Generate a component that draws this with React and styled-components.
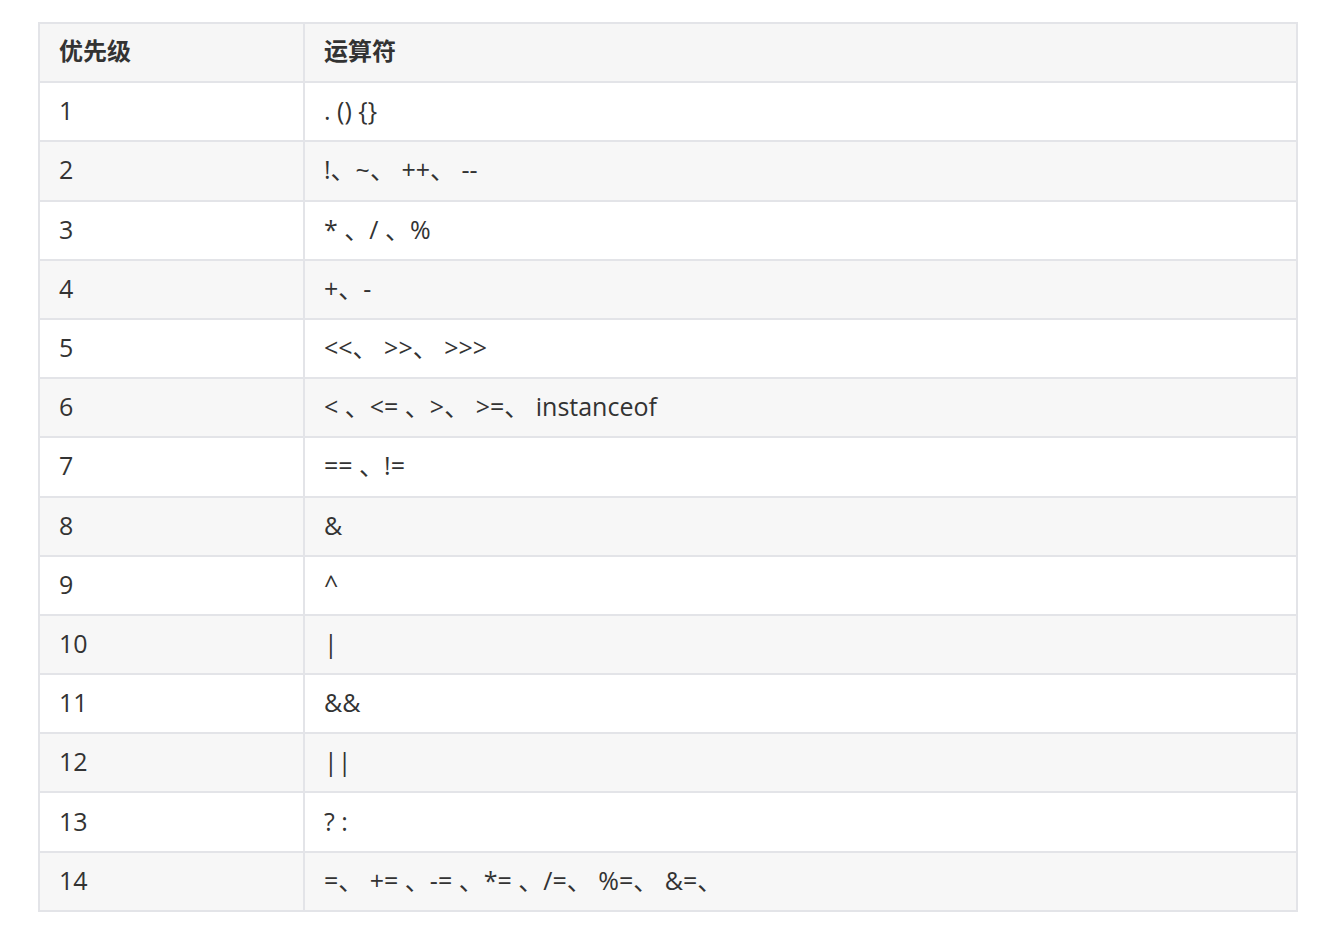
import styled, { createGlobalStyle } from "styled-components";

const GlobalStyle = createGlobalStyle`
  body {
    margin: 0;
    background: #fff;
  }
`;

const rows = [
  ["1", ". () {}"],
  ["2", "!、~、 ++、 --"],
  ["3", "* 、/ 、%"],
  ["4", "+、-"],
  ["5", "<<、 >>、 >>>"],
  ["6", "< 、<= 、>、 >=、 instanceof"],
  ["7", "== 、!="],
  ["8", "&"],
  ["9", "^"],
  ["10", "|"],
  ["11", "&&"],
  ["12", "||"],
  ["13", "? :"],
  ["14", "=、 += 、-= 、*= 、/=、 %=、 &=、"],
];

const App = () => {
  return (
    <Page>
      <GlobalStyle />
      <StyledTable>
        <colgroup>
          <col style={{ width: "265px" }} />
          <col />
        </colgroup>
        <thead>
          <HeadRow>
            <HeadCell>优先级</HeadCell>
            <HeadCell>运算符</HeadCell>
          </HeadRow>
        </thead>
        <tbody>
          {rows.map(([level, ops], i) => (
            <BodyRow key={level} $striped={i % 2 === 1}>
              <Cell>{level}</Cell>
              <Cell>{ops}</Cell>
            </BodyRow>
          ))}
        </tbody>
      </StyledTable>
    </Page>
  );
};

const Page = styled.div`
  padding: 22px 40px 20px 38px;
`;

const StyledTable = styled.table`
  width: 1260px;
  table-layout: fixed;
  border-collapse: collapse;
  font-family: "Open Sans", "Noto Sans CJK SC", sans-serif;
  font-size: 25px;
  color: #333;
`;

const HeadRow = styled.tr`
  height: 59.2px;
  background: #f6f6f6;
`;

const BodyRow = styled.tr`
  height: 59.2px;
  background: ${(p) => (p.$striped ? "#f7f7f7" : "#fff")};
`;

const HeadCell = styled.th`
  padding: 0 19px 6px;
  border: 2px solid #e3e4e8;
  text-align: left;
  font-family: "Noto Sans CJK SC", sans-serif;
  font-size: 24px;
  font-weight: 700;
  line-height: 1;
  color: #333;
`;

const Cell = styled.td`
  padding: 0 19px 2px;
  border: 2px solid #e3e4e8;
  white-space: pre;
  line-height: 1.4;
`;

export default App;
